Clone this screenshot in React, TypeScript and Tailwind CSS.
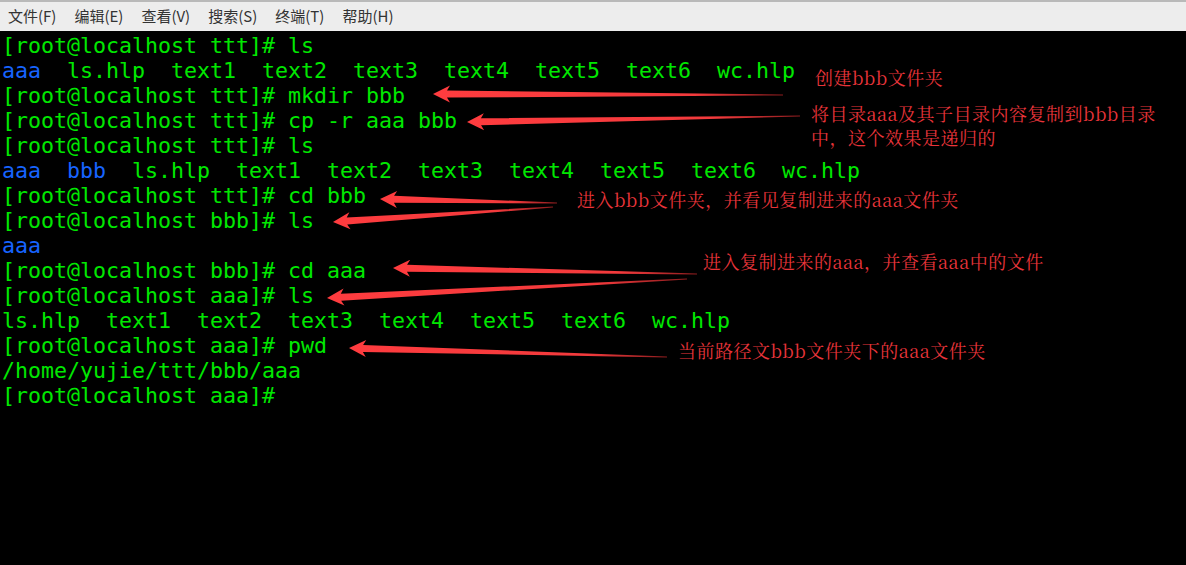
import React from 'react';

const G = 'text-[#00e800]';
const B = 'text-[#1764ff]';

type Seg = [string, string];

const lines: Seg[][] = [
  [[G, '[root@localhost ttt]# ls']],
  [[B, 'aaa'], [G, '  ls.hlp  text1  text2  text3  text4  text5  text6  wc.hlp']],
  [[G, '[root@localhost ttt]# mkdir bbb']],
  [[G, '[root@localhost ttt]# cp -r aaa bbb']],
  [[G, '[root@localhost ttt]# ls']],
  [[B, 'aaa  bbb'], [G, '  ls.hlp  text1  text2  text3  text4  text5  text6  wc.hlp']],
  [[G, '[root@localhost ttt]# cd bbb']],
  [[G, '[root@localhost bbb]# ls']],
  [[B, 'aaa']],
  [[G, '[root@localhost bbb]# cd aaa']],
  [[G, '[root@localhost aaa]# ls']],
  [[G, 'ls.hlp  text1  text2  text3  text4  text5  text6  wc.hlp']],
  [[G, '[root@localhost aaa]# pwd']],
  [[G, '/home/yujie/ttt/bbb/aaa']],
  [[G, '[root@localhost aaa]#']],
];

const menus = ['文件(F)', '编辑(E)', '查看(V)', '搜索(S)', '终端(T)', '帮助(H)'];

// tail (x1,y1) -> tip (x2,y2)
const Arrow = ({ x1, y1, x2, y2 }: { x1: number; y1: number; x2: number; y2: number }) => {
  const dx = x1 - x2;
  const dy = y1 - y2;
  const len = Math.sqrt(dx * dx + dy * dy);
  const deg = (Math.atan2(dy, dx) * 180) / Math.PI;
  const pts = `0,0 17,-8.5 14,-3.5 ${len},-0.4 ${len},0.4 14,3.5 17,8.5`;
  return (
    <polygon
      points={pts}
      fill="url(#fade)"
      transform={`translate(${x2} ${y2}) rotate(${deg})`}
    />
  );
};

const notes = [
  { x: 815, y: 65, text: '创建bbb文件夹' },
  { x: 811, y: 101, text: '将目录aaa及其子目录内容复制到bbb目录\n中，这个效果是递归的' },
  { x: 577, y: 187, text: '进入bbb文件夹，并看见复制进来的aaa文件夹' },
  { x: 703, y: 249, text: '进入复制进来的aaa，并查看aaa中的文件' },
  { x: 678, y: 338, text: '当前路径文bbb文件夹下的aaa文件夹' },
];

export default function App() {
  return (
    <div className="w-[1186px] h-[565px] overflow-hidden flex flex-col bg-black">
      <div className="h-[31px] shrink-0 bg-[#ededed] border-t-2 border-[#b9b9b9] flex items-center gap-[18px] pl-[8px] text-[15px] text-[#333] font-['Noto_Sans_CJK_SC',sans-serif]">
        {menus.map((m) => (
          <span key={m}>{m}</span>
        ))}
      </div>
      <div className="relative flex-1 bg-black pt-[2px] pl-[2px]">
        <div className="font-['DejaVu_Sans_Mono',monospace] text-[21.6px] leading-[25px] whitespace-pre">
          {lines.map((segs, i) => (
            <div key={i}>
              {segs.map(([c, t], j) => (
                <span key={j} className={c}>
                  {t}
                </span>
              ))}
            </div>
          ))}
        </div>
        <svg className="absolute left-0 top-[-31px]" width="1186" height="565">
          <defs>
            <linearGradient id="fade" x1="0" y1="0" x2="1" y2="0">
              <stop offset="0" stopColor="#ff3c3f" />
              <stop offset="0.75" stopColor="#f23a3c" />
              <stop offset="1" stopColor="#8c1c1e" />
            </linearGradient>
          </defs>
          <Arrow x1={783} y1={95} x2={433} y2={94} />
          <Arrow x1={800} y1={116} x2={467} y2={122} />
          <Arrow x1={557} y1={203} x2={380} y2={199} />
          <Arrow x1={553} y1={207} x2={333} y2={222} />
          <Arrow x1={697} y1={274} x2={393} y2={268} />
          <Arrow x1={687} y1={279} x2={327} y2={298} />
          <Arrow x1={667} y1={357} x2={349} y2={348} />
        </svg>
        {notes.map((n) => (
          <div
            key={n.text}
            className="absolute whitespace-pre text-[18px] tracking-[0.5px] leading-[24px] text-[#e8343a] font-['Noto_Serif_CJK_SC','Noto_Sans_CJK_SC',serif]"
            style={{ left: n.x, top: n.y - 31 }}
          >
            {n.text}
          </div>
        ))}
      </div>
    </div>
  );
}
